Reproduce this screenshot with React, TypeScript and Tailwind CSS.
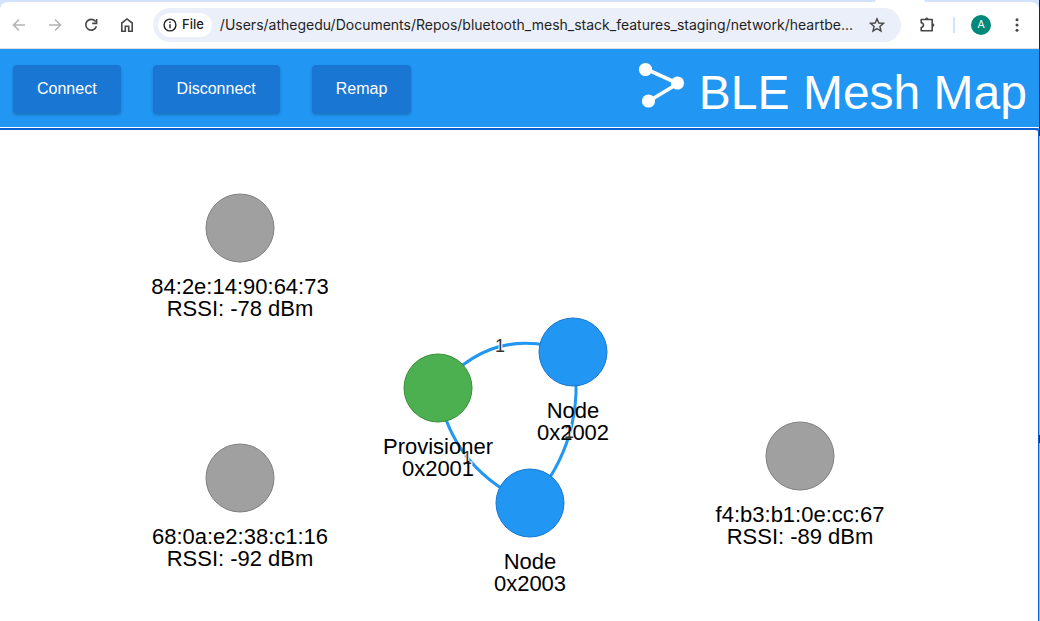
import React from "react";

type MeshNode = { id: string; x: number; y: number; fill: string; stroke: string; lines: [string, string] };
type Edge = { from: [number, number]; via: [number, number]; to: [number, number]; label: [number, number] };

const BLUE = { fill: "#2196f3", stroke: "#1976d2" };
const GREEN = { fill: "#4caf50", stroke: "#388e3c" };
const GREY = { fill: "#a0a0a0", stroke: "#808080" };

const nodes: MeshNode[] = [
  { id: "b1", x: 240, y: 98, ...GREY, lines: ["84:2e:14:90:64:73", "RSSI: -78 dBm"] },
  { id: "b2", x: 240, y: 348, ...GREY, lines: ["68:0a:e2:38:c1:16", "RSSI: -92 dBm"] },
  { id: "b3", x: 800, y: 326, ...GREY, lines: ["f4:b3:b1:0e:cc:67", "RSSI: -89 dBm"] },
  { id: "prov", x: 438, y: 258, ...GREEN, lines: ["Provisioner", "0x2001"] },
  { id: "n2", x: 573, y: 222, ...BLUE, lines: ["Node", "0x2002"] },
  { id: "n3", x: 530, y: 373, ...BLUE, lines: ["Node", "0x2003"] },
];

const edges: Edge[] = [
  { from: [438, 259], via: [494, 192], to: [573, 223], label: [500, 222] },
  { from: [438, 258], via: [450, 338], to: [530, 374], label: [467, 334] },
  { from: [573, 222], via: [588, 308], to: [530, 374], label: [569, 308] },
];

function IconButton({ label, disabled, children }: { label: string; disabled?: boolean; children: React.ReactNode }) {
  return (
    <button type="button" aria-label={label} disabled={disabled} className="flex size-5 shrink-0 items-center justify-center text-[#474747] disabled:text-[#b4b4b4]">
      <svg viewBox="0 0 20 20" className="size-5" fill="none" stroke="currentColor" strokeWidth="1.6" aria-hidden="true">
        {children}
      </svg>
    </button>
  );
}

function BrowserBar() {
  return (
    <div className="bg-[#d3e3fd]">
      <div className="flex h-0.5 justify-end pr-[114px]">
        <div className="w-[50px] rounded-t-full bg-white" />
      </div>
      <div className="flex h-[47px] items-center rounded-t-lg border-b border-[#dcdcdc] bg-white pr-3 pl-[9px]">
        <div className="flex gap-4">
          <IconButton label="Back" disabled>
            <path d="M16 10H4.8M10 4.5 4.5 10l5.5 5.5" />
          </IconButton>
          <IconButton label="Forward" disabled>
            <path d="M4 10h11.2M10 4.5l5.5 5.5-5.5 5.5" />
          </IconButton>
          <IconButton label="Reload">
            <path d="M14.6 6.6A5.4 5.4 0 1 0 15.4 11.2M15.6 4v4.4h-4.4" />
          </IconButton>
          <IconButton label="Home">
            <path d="M4.800 16.200V8L10 3.900l5.200 4.100v8.200h-3.500v-5H8.300v5z" />
          </IconButton>
        </div>
        <div className="ml-4 flex h-[34px] min-w-0 flex-1 items-center rounded-full bg-[#ebeff9] pr-3.5 pl-[5px]">
          <button type="button" className="flex h-6 shrink-0 items-center gap-1 rounded-full bg-white pr-2 pl-1 font-[Inter,sans-serif] text-[13px] font-medium text-[#1f1f1f]">
            <svg viewBox="0 0 16 16" className="size-4" fill="none" stroke="currentColor" strokeWidth="1.4" aria-hidden="true">
              <circle cx="8" cy="8" r="5.9" />
              <path d="M8 7.2v4M8 4.6v1.5" />
            </svg>
            File
          </button>
          <input
            aria-label="Address"
            readOnly
            value="/Users/athegedu/Documents/Repos/bluetooth_mesh_stack_features_staging/network/heartbe..."
            className="ml-2 min-w-0 flex-1 bg-transparent font-[Inter,sans-serif] text-sm text-[#1f1f1f] outline-none"
          />
          <button type="button" aria-label="Bookmark" className="ml-1 shrink-0 text-[#474747]">
            <svg viewBox="0 0 20 20" className="size-5" fill="none" stroke="currentColor" strokeWidth="1.4" aria-hidden="true">
              <path d="M10 3.700l1.800 4.300 4.700.4-3.600 3.100 1.100 4.600-4-2.500-4 2.500 1.100-4.600L3.500 8.400l4.700-.4z" />
            </svg>
          </button>
        </div>
        <div className="ml-4 flex items-center">
          <IconButton label="Extensions">
            <path d="M4.200 4.500h11v11.300h-11v-3.300c3-.4 3-4.400 0-4.800z" strokeLinejoin="round" />
            <path d="M8 4.200a1.800 1.800 0 0 1 3.600 0zM15.600 8.300a1.800 1.800 0 0 1 0 3.600z" fill="currentColor" stroke="none" />
          </IconButton>
          <div className="ml-4 h-4 w-0.5 bg-[#d3e3fd]" />
          <button type="button" aria-label="Profile" className="ml-4 flex size-5 items-center justify-center rounded-full bg-[#00897b] font-[Roboto,sans-serif] text-[11px] text-white">
            A
          </button>
          <button type="button" aria-label="Menu" className="ml-4 text-[#474747]">
            <svg viewBox="0 0 20 20" className="size-5" fill="currentColor" aria-hidden="true">
              <circle cx="10" cy="4.800" r="1.500" />
              <circle cx="10" cy="10" r="1.500" />
              <circle cx="10" cy="15.200" r="1.500" />
            </svg>
          </button>
        </div>
      </div>
    </div>
  );
}

function Header() {
  return (
    <header className="flex h-[79px] items-start justify-between border-b border-white bg-[#2196f3] pr-3 pl-[13px]">
      <nav className="flex gap-8 pt-4">
        {["Connect", "Disconnect", "Remap"].map((name) => (
          <button key={name} type="button" className="h-12 rounded-sm bg-[#1976d2] px-6 text-base text-white shadow-[0_2px_3px_rgba(0,0,0,0.22)]">
            {name}
          </button>
        ))}
      </nav>
      <div className="flex items-start gap-3.5 text-white">
        <svg viewBox="0 0 48 48" className="mt-3 size-12" fill="currentColor" stroke="currentColor" aria-hidden="true">
          <path d="M9 8l32 14.500L12 40" fill="none" strokeWidth="3.600" />
          <circle cx="8.500" cy="8.500" r="6.600" stroke="none" />
          <circle cx="40.500" cy="22" r="6.600" stroke="none" />
          <circle cx="11.500" cy="40" r="6.600" stroke="none" />
        </svg>
        <h1 className="pt-5 text-5xl">BLE Mesh Map</h1>
      </div>
    </header>
  );
}

function MeshGraph() {
  return (
    <main className="flex flex-1 rounded-tr-sm border-t-2 border-r border-[#0b5fd0] bg-white">
      <svg className="min-h-[480px] w-full" textAnchor="middle" role="img" aria-label="Mesh network map">
        {edges.map((e, i) => (
          <g key={i}>
            <path d={`M${e.from} Q${e.via} ${e.to}`} fill="none" stroke="#2196f3" strokeWidth="3" />
            <text x={e.label[0]} y={e.label[1]} fill="#343434" stroke="#ffffff" strokeWidth="2" paintOrder="stroke" className="text-lg">
              1
            </text>
          </g>
        ))}
        {nodes.map((n) => (
          <g key={n.id}>
            <circle cx={n.x} cy={n.y} r="34" fill={n.fill} stroke={n.stroke} />
            <text x={n.x} y={n.y + 66} className="text-[22px]">{n.lines[0]}</text>
            <text x={n.x} y={n.y + 88} className="text-[22px]">{n.lines[1]}</text>
          </g>
        ))}
      </svg>
    </main>
  );
}

export default function App() {
  return (
    <div className="flex min-h-screen font-['Liberation_Sans',Arial,sans-serif]">
      <div className="flex min-w-0 flex-1 flex-col bg-[#2196f3]">
        <BrowserBar />
        <Header />
        <MeshGraph />
      </div>
      <div className="flex w-px flex-col bg-[#a9bdd6]">
        <div className="h-[136px] bg-[#202632]" />
        <div className="mt-[299px] h-2 bg-[#202632]" />
      </div>
    </div>
  );
}
